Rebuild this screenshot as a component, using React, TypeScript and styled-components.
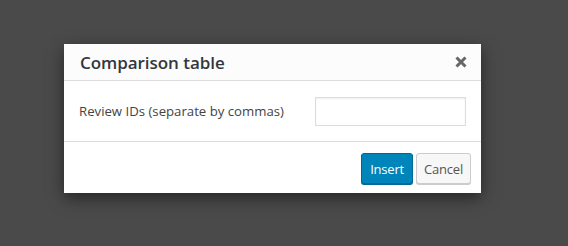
import React from "react";
import styled, { createGlobalStyle } from "styled-components";

const Global = createGlobalStyle`
  html, body { margin: 0; padding: 0; }
  body {
    width: 568px;
    height: 246px;
    background: #4a4a4a;
    font-family: "Open Sans", "Noto Sans", sans-serif;
    overflow: hidden;
  }
`;

const Stage = styled.div`
  width: 568px;
  height: 246px;
  padding: 44px 0 0 64px;
  box-sizing: border-box;
`;

const Dialog = styled.div`
  width: 417px;
  background: #fff;
  box-shadow: 0 5px 15px rgba(0, 0, 0, 0.5);
  display: flex;
  flex-direction: column;
`;

const Header = styled.div`
  height: 36px;
  background: #fcfcfc;
  border-bottom: 1px solid #dddddd;
  display: flex;
  align-items: center;
  justify-content: space-between;
  padding: 0 13px 0 16px;
`;

const Title = styled.h1`
  margin: 0;
  font-size: 17px;
  font-weight: 600;
  color: #32373c;
  letter-spacing: -0.05px;
`;

const Close = styled.button`
  border: 0;
  background: transparent;
  padding: 0;
  width: 14px;
  height: 14px;
  display: flex;
  align-items: center;
  justify-content: center;
  cursor: pointer;
`;

const Body = styled.div`
  height: 60px;
  border-bottom: 1px solid #dddddd;
  display: flex;
  align-items: center;
  justify-content: space-between;
  padding: 0 15px 0 15px;
`;

const Label = styled.label`
  font-size: 13.2px;
  color: #444;
`;

const Input = styled.input`
  width: 151px;
  height: 29px;
  box-sizing: border-box;
  border: 1px solid #dddddd;
  box-shadow: inset 0 1px 2px rgba(0, 0, 0, 0.07);
  background: #fff;
  outline: none;
`;

const Footer = styled.div`
  display: flex;
  justify-content: flex-end;
  gap: 3px;
  padding: 11px 10px 9px 0;
`;

const Button = styled.button<{ $primary?: boolean }>`
  height: 31px;
  box-sizing: border-box;
  padding: 0 ${(p) => (p.$primary ? "8px" : "7px")};
  font-family: "Open Sans", "Noto Sans", sans-serif;
  font-size: 13px;
  letter-spacing: -0.2px;
  border-radius: 3px;
  cursor: pointer;
  border: 1px solid ${(p) => (p.$primary ? "#006799" : "#cccccc")};
  background: ${(p) => (p.$primary ? "#0085ba" : "#f7f7f7")};
  color: ${(p) => (p.$primary ? "#ffffff" : "#555555")};
  box-shadow: ${(p) =>
    p.$primary ? "0 1px 0 #006799" : "0 1px 0 #cccccc"};
`;

export default function App() {
  return (
    <>
      <Global />
      <Stage>
        <Dialog>
          <Header>
            <Title>Comparison table</Title>
            <Close aria-label="Close">
              <svg width="12" height="12" viewBox="0 0 12 12">
                <path
                  d="M1.5 1.5 L10.5 10.5 M10.5 1.5 L1.5 10.5"
                  stroke="#666"
                  strokeWidth="3"
                  strokeLinecap="butt"
                />
              </svg>
            </Close>
          </Header>
          <Body>
            <Label>Review IDs (separate by commas)</Label>
            <Input type="text" />
          </Body>
          <Footer>
            <Button $primary>Insert</Button>
            <Button>Cancel</Button>
          </Footer>
        </Dialog>
      </Stage>
    </>
  );
}
